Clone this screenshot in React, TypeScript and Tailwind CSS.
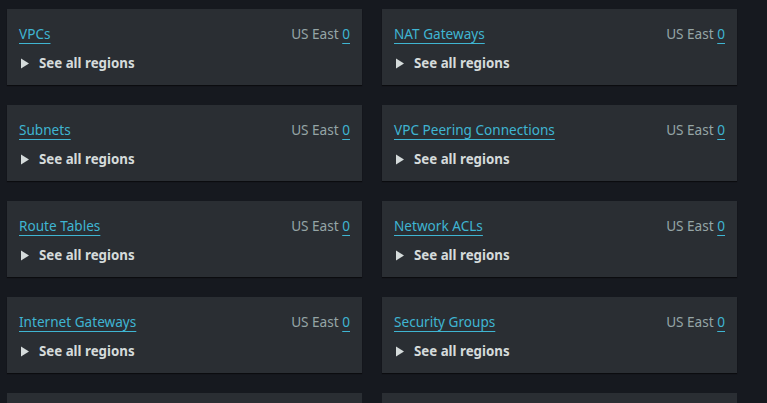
import React from "react";

const items = [
  "VPCs",
  "NAT Gateways",
  "Subnets",
  "VPC Peering Connections",
  "Route Tables",
  "Network ACLs",
  "Internet Gateways",
  "Security Groups",
];

function Card({ name }: { name: string }) {
  return (
    <div className="h-[76px] bg-[#2a2e33] shadow-[0_1px_1px_0_rgba(0,0,0,0.5)] px-3 pt-[15px]">
      <div className="flex justify-between items-start text-[13.6px] leading-[20px]">
        <a className="text-[#3fb5d2] underline underline-offset-[4px] decoration-1 cursor-pointer">{name}</a>
        <span className="text-[#95a5a6]">
          US East{" "}
          <a className="text-[#3fb5d2] underline underline-offset-[4px] decoration-1">0</a>
        </span>
      </div>
      <div className="mt-[9px] flex items-center gap-[10px] text-[13.3px] leading-[20px] font-bold text-[#d5dbdb]">
        <svg width="8" height="11" viewBox="0 0 8 11" className="ml-[2px]">
          <path d="M0 0.5 L8 5.5 L0 10.5 Z" fill="#d5dbdb" />
        </svg>
        <span>See all regions</span>
      </div>
    </div>
  );
}

export default function App() {
  return (
    <div
      className="w-[767px] h-[403px] overflow-hidden bg-[#16191f]"
      style={{ fontFamily: '"Noto Sans", "Open Sans", sans-serif' }}
    >
      <div className="grid grid-cols-[355px_355px] gap-x-[20px] gap-y-[20px] pl-[7px] pt-[9px]">
        {items.map((n) => (
          <Card key={n} name={n} />
        ))}
        <div className="h-[76px] bg-[#2a2e33]" />
        <div className="h-[76px] bg-[#2a2e33]" />
      </div>
    </div>
  );
}
